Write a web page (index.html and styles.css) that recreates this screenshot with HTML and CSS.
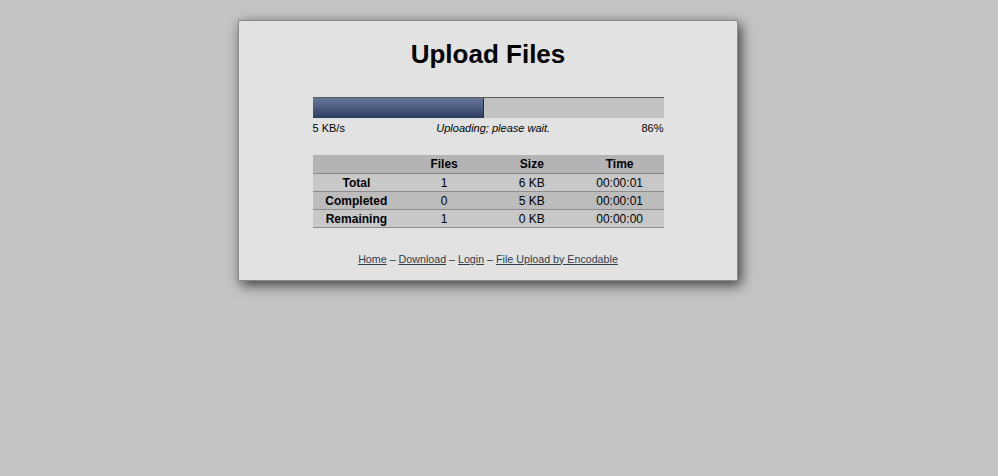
FILE: index.html
```html
<!DOCTYPE html>
<html lang="en">
<head>
    <meta charset="UTF-8">
    <title>Upload Files</title>
    <link rel="stylesheet" href="styles.css">
</head>
<body>
    <div class="page">
        <h1>Upload Files</h1>

        <div class="progress">
            <div class="progress-bar">
                <div class="progress-fill" style="width: 49%"></div>
            </div>
            <div class="progress-info">
                <span class="rate">5 KB/s</span>
                <span class="message">Uploading; please wait.</span>
                <span class="percent">86%</span>
            </div>
        </div>

        <table class="stats">
            <thead>
                <tr>
                    <th></th>
                    <th>Files</th>
                    <th>Size</th>
                    <th>Time</th>
                </tr>
            </thead>
            <tbody>
                <tr>
                    <th>Total</th>
                    <td>1</td>
                    <td>6 KB</td>
                    <td>00:00:01</td>
                </tr>
                <tr class="alt">
                    <th>Completed</th>
                    <td>0</td>
                    <td>5 KB</td>
                    <td>00:00:01</td>
                </tr>
                <tr>
                    <th>Remaining</th>
                    <td>1</td>
                    <td>0 KB</td>
                    <td>00:00:00</td>
                </tr>
            </tbody>
        </table>

        <div class="footer">
            <a href="#">Home</a> &ndash; <a href="#">Download</a> &ndash; <a href="#">Login</a> &ndash; <a href="#">File Upload by Encodable</a>
        </div>
    </div>
</body>
</html>
```

FILE: styles.css
```css
* {
    margin: 0;
    padding: 0;
    box-sizing: border-box;
}

html {
    background-color: #c4c4c4;
}

body {
    font-family: "Liberation Sans", Arial, sans-serif;
    color: #000;
    min-height: 476px;
    padding: 20px 0 40px 238px;
}

.page {
    width: 500px;
    height: 261px;
    background: #e2e2e2;
    border: 1px solid #8a8a8a;
    box-shadow: 3px 4px 12px rgba(0,0,0,0.7);
    padding-top: 18px;
}

h1 {
    font-size: 26px;
    font-weight: bold;
    text-align: center;
    line-height: 30px;
}

.progress {
    width: 351px;
    margin: 28px auto 0;
}

.progress-bar {
    height: 21px;
    background: #c2c2c2;
    border-top: 1px solid #5a5a5a;
    display: flex;
}

.progress-fill {
    height: 100%;
    background: linear-gradient(to bottom, #66769a, #4a5a80 50%, #2e3c5e);
    border-right: 1px solid #2a2a2a;
}

.progress-info {
    display: flex;
    justify-content: space-between;
    font-size: 11px;
    line-height: 14px;
    margin-top: 3px;
}

.progress-info .message {
    font-style: italic;
}

.stats {
    width: 351px;
    margin: 20px auto 0;
    border-collapse: collapse;
    table-layout: fixed;
    font-size: 12px;
}

.stats th,
.stats td {
    height: 18px;
    padding: 1px 0 0;
    text-align: center;
    border-bottom: 1px solid #8c8c8c;
    line-height: 16px;
}

.stats thead th {
    background: #b4b4b4;
}

.stats tbody tr {
    background: #c8c8c8;
}

.stats tbody tr.alt {
    background: #bcbcbc;
}

.footer {
    text-align: center;
    font-size: 10.7px;
    color: #2a3440;
    margin-top: 25px;
}

.footer a {
    color: #2e3c4c;
    text-decoration: underline;
}
```
